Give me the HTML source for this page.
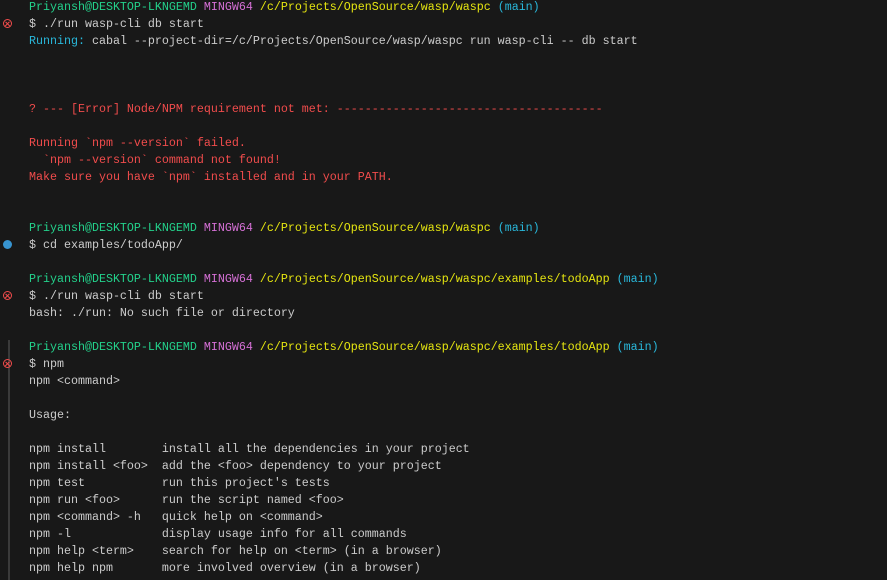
<!DOCTYPE html>
<html><head><style>
html,body{margin:0;background:#181818;width:887px;height:577px;overflow:hidden}
pre{margin:0;position:absolute;left:29px;top:-1px;font-family:"Liberation Mono",monospace;font-size:11.67px;line-height:17px;color:#cccccc}
.g{color:#23d18b}.m{color:#d670d6}.y{color:#e5e510}.b{color:#3b8eea}.r{color:#f14c4c}.c{color:#29b8db}
.ic{position:absolute;left:3px;width:9px;height:9px;border-radius:50%;box-sizing:border-box}
.x{border:1.3px solid #f14c4c}
.x:before,.x:after{content:"";position:absolute;left:3px;top:0.5px;width:1.2px;height:5.5px;background:#f14c4c;transform:rotate(45deg)}
.x:after{transform:rotate(-45deg)}
.d{background:#3794d0}
.bar{position:absolute;left:8px;top:340px;width:2px;height:240px;background:#3a3a3a}
</style></head><body>
<div class="bar"></div>
<div class="ic x" style="top:19px"></div>
<div class="ic d" style="top:240px"></div>
<div class="ic x" style="top:291px"></div>
<div class="ic x" style="top:359px"></div>
<pre><span class="g">Priyansh@DESKTOP-LKNGEMD</span> <span class="m">MINGW64</span> <span class="y">/c/Projects/OpenSource/wasp/waspc</span> <span class="c">(main)</span>
$ ./run wasp-cli db start
<span class="c">Running:</span> cabal --project-dir=/c/Projects/OpenSource/wasp/waspc run wasp-cli -- db start



<span class="r">? --- [Error] Node/NPM requirement not met: --------------------------------------</span>

<span class="r">Running `npm --version` failed.</span>
<span class="r">  `npm --version` command not found!</span>
<span class="r">Make sure you have `npm` installed and in your PATH.</span>


<span class="g">Priyansh@DESKTOP-LKNGEMD</span> <span class="m">MINGW64</span> <span class="y">/c/Projects/OpenSource/wasp/waspc</span> <span class="c">(main)</span>
$ cd examples/todoApp/

<span class="g">Priyansh@DESKTOP-LKNGEMD</span> <span class="m">MINGW64</span> <span class="y">/c/Projects/OpenSource/wasp/waspc/examples/todoApp</span> <span class="c">(main)</span>
$ ./run wasp-cli db start
bash: ./run: No such file or directory

<span class="g">Priyansh@DESKTOP-LKNGEMD</span> <span class="m">MINGW64</span> <span class="y">/c/Projects/OpenSource/wasp/waspc/examples/todoApp</span> <span class="c">(main)</span>
$ npm
npm &lt;command&gt;

Usage:

npm install        install all the dependencies in your project
npm install &lt;foo&gt;  add the &lt;foo&gt; dependency to your project
npm test           run this project's tests
npm run &lt;foo&gt;      run the script named &lt;foo&gt;
npm &lt;command&gt; -h   quick help on &lt;command&gt;
npm -l             display usage info for all commands
npm help &lt;term&gt;    search for help on &lt;term&gt; (in a browser)
npm help npm       more involved overview (in a browser)</pre>
</body></html>
